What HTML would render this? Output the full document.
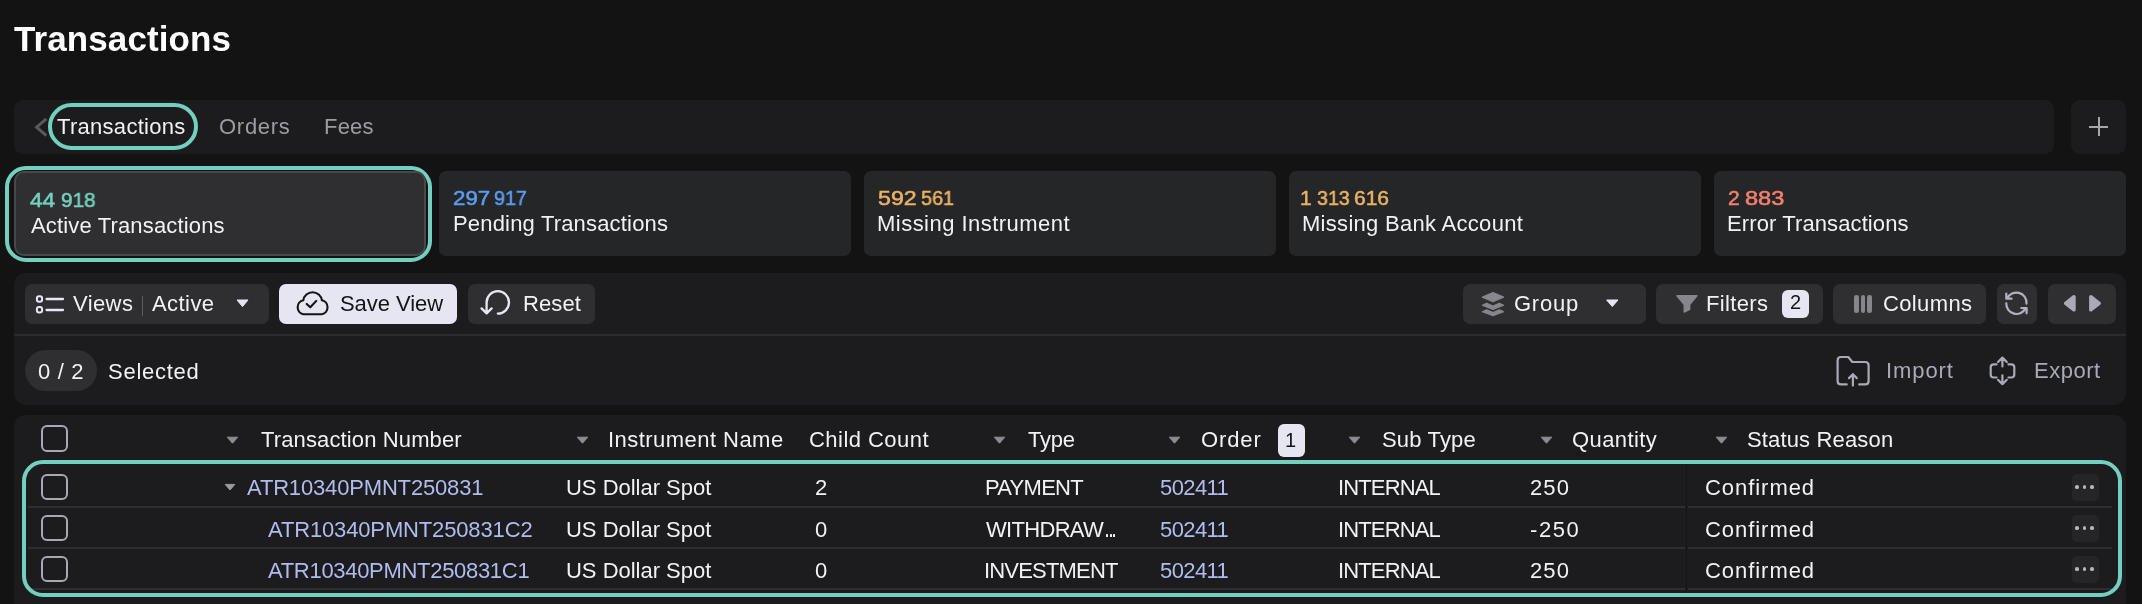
<!DOCTYPE html><html><head><meta charset="utf-8"><style>
*{box-sizing:border-box;margin:0;padding:0}
html,body{width:2142px;height:604px;overflow:hidden;background:#131313}
body{position:relative;font-family:"Liberation Sans",sans-serif;color:#f2f2f6}
.a{position:absolute}
.t{position:absolute;white-space:nowrap;will-change:transform}
.panel{position:absolute;background:#1c1c1e}
.card{position:absolute;top:171px;width:412px;height:85px;background:#252628;border-radius:7px}
.btn{position:absolute;top:284px;height:40px;background:#2f2f32;border-radius:7px}
.cb{position:absolute;left:41px;width:27px;height:26.5px;border:2px solid #a8a9b2;border-radius:6px}
.ring{position:absolute;border:4px solid #73cfbf}
.dots{position:absolute;left:2072px;width:27px;height:27px;background:#252528;border-radius:5px}
.dots i{position:absolute;top:11.3px;width:3.7px;height:3.7px;border-radius:50%;background:#b4b5bd}

</style></head><body>
<div class="panel" style="left:14px;top:100px;width:2040px;height:54px;border-radius:9px"></div>
<svg class="a" style="left:30px;top:112px" width="22" height="30" viewBox="0 0 22 30"><path d="M16.3 6.8 L6.6 15.2 L16.3 23.6" fill="none" stroke="#58585d" stroke-width="3" stroke-linecap="butt"/></svg>
<div class="ring" style="left:48px;top:103px;width:150px;height:47px;border-radius:24px"></div>
<div class="panel" style="left:2071px;top:100px;width:55px;height:54px;border-radius:9px"></div>
<div class="a" style="left:2089px;top:125.5px;width:19px;height:2px;background:#a6a6ac"></div>
<div class="a" style="left:2097.5px;top:117px;width:2px;height:19px;background:#a6a6ac"></div>
<div class="ring" style="left:5px;top:166px;width:427px;height:96px;border-radius:21px"></div>
<div class="a" style="left:14px;top:171px;width:412px;height:85px;background:#2f2f31;border:2px solid #48484b;border-radius:10px"></div>
<div class="card" style="left:439px"></div>
<div class="card" style="left:864px"></div>
<div class="card" style="left:1289px"></div>
<div class="card" style="left:1714px;width:411.5px"></div>
<div class="panel" style="left:14px;top:273px;width:2112px;height:132px;border-radius:12px"></div>
<div class="a" style="left:14px;top:334px;width:2112px;height:2px;background:#2b2b2e"></div>
<div class="btn" style="left:25px;width:244px"></div>
<svg class="a" style="left:30px;top:288px" width="40" height="32" viewBox="0 0 40 32"><rect x="6.9" y="8.2" width="5.2" height="5.6" rx="2.3" fill="none" stroke="#e8e8f2" stroke-width="2"/><rect x="6.9" y="19" width="5.2" height="5.6" rx="2.3" fill="none" stroke="#e8e8f2" stroke-width="2"/><path d="M16.6 11 H33 M16.6 22 H33" stroke="#e8e8f2" stroke-width="2.3" stroke-linecap="round"/></svg>
<div class="a" style="left:141.5px;top:296px;width:1.5px;height:20px;background:#5a5a5f"></div>
<svg class="a" style="left:236px;top:299px" width="13" height="9" viewBox="0 0 13 9"><path d="M1 1 H12 L6.5 7.6 Z" fill="#e6e6f2" stroke="#e6e6f2" stroke-width="1" stroke-linejoin="round"/></svg>
<div class="btn" style="left:279px;width:178px;background:#e5e6f2"></div>
<svg class="a" style="left:290px;top:286px" width="45" height="34" viewBox="0 0 45 34"><path d="M13.3 28.2 A7.1 7.1 0 0 1 13.3 14.3 A9.4 9.4 0 0 1 31.9 14.3 A7.1 7.1 0 0 1 31.9 28.2 Z" fill="none" stroke="#141416" stroke-width="2.1" stroke-linejoin="round"/><path d="M16.7 17.9 L20.3 21.3 L26.3 14.9" fill="none" stroke="#141416" stroke-width="2.1" stroke-linecap="round" stroke-linejoin="round"/></svg>
<div class="btn" style="left:468px;width:127px"></div>
<svg class="a" style="left:475px;top:286px" width="40" height="34" viewBox="0 0 40 34"><path d="M22.8 27.6 A11.2 11.2 0 1 0 11.6 16.4 L11.6 27.2 M6.6 22.4 L11.6 27.4 L16.6 22.4" fill="none" stroke="#e8e8f2" stroke-width="2.3" stroke-linecap="round" stroke-linejoin="round"/></svg>
<div class="btn" style="left:1463px;width:183px"></div>
<svg class="a" style="left:1476px;top:288px" width="34" height="32" viewBox="0 0 34 32"><path d="M17 4.6 L27.6 9.1 L17 13.6 L6.4 9.1 Z" fill="#86868c" stroke="#86868c" stroke-width="1.2" stroke-linejoin="round"/><path d="M6.4 17.2 L10.6 15.2 L17 18 L23.4 15.2 L27.6 17.2 L17 21.4 Z" fill="#86868c" stroke="#86868c" stroke-width="1.2" stroke-linejoin="round"/><path d="M6.4 23.8 L10.6 21.8 L17 24.6 L23.4 21.8 L27.6 23.8 L17 27.6 Z" fill="#86868c" stroke="#86868c" stroke-width="1.2" stroke-linejoin="round"/></svg>
<svg class="a" style="left:1605px;top:299px" width="15" height="9" viewBox="0 0 15 9"><path d="M1.6 1 H13 L7.3 7.6 Z" fill="#e6e6f2" stroke="#e6e6f2" stroke-width="1" stroke-linejoin="round"/></svg>
<div class="btn" style="left:1656px;width:167px"></div>
<svg class="a" style="left:1670px;top:288px" width="35" height="32" viewBox="0 0 35 32"><path d="M6.9 7.8 L27 7.8 L19.7 16.6 L19.7 21.3 L14.2 24 L14.2 16.6 Z" fill="#86868c" stroke="#86868c" stroke-width="1.4" stroke-linejoin="round"/></svg>
<div class="a" style="left:1782px;top:290px;width:27px;height:28px;background:#e5e6f2;border-radius:6px"></div>
<div class="btn" style="left:1833px;width:153px"></div>
<div class="a" style="left:1854.2px;top:295.2px;width:4.6px;height:17.4px;background:#86868c;border-radius:2.3px"></div>
<div class="a" style="left:1860.9px;top:295.2px;width:4.6px;height:17.4px;background:#86868c;border-radius:2.3px"></div>
<div class="a" style="left:1867.1px;top:295.2px;width:4.6px;height:17.4px;background:#86868c;border-radius:2.3px"></div>
<div class="btn" style="left:1997px;width:40px"></div>
<svg class="a" style="left:1998px;top:286px" width="40" height="34" viewBox="0 0 40 34"><path d="M9.2 12.6 A10.1 10.1 0 0 1 28.5 17.6 M8.3 7.5 L8.3 12.7 L13.6 12.7 M8.3 17.3 A10.1 10.1 0 0 0 27.6 22 M23.3 22 L28.6 22 L28.6 27.3" fill="none" stroke="#b0b2bc" stroke-width="2.2" stroke-linecap="round" stroke-linejoin="round"/></svg>
<div class="btn" style="left:2048px;width:68px"></div>
<svg class="a" style="left:2058px;top:290px" width="50" height="28" viewBox="0 0 50 28"><path d="M7.6 13.3 L16 6.7 L16 19.9 Z M41.2 13.3 L32.8 6.7 L32.8 19.9 Z" fill="#a8aab4" stroke="#a8aab4" stroke-width="3.4" stroke-linejoin="round"/></svg>
<div class="a" style="left:25px;top:350px;width:72px;height:41px;background:#2f2f32;border-radius:21px"></div>
<svg class="a" style="left:1830px;top:350px" width="50" height="42" viewBox="0 0 50 42"><path d="M16.7 34.4 L11 34.4 Q7.6 34.4 7.6 31 L7.6 10.4 Q7.6 7 11 7 L18.3 7 L22.3 12 L35.2 12 Q38.6 12 38.6 15.4 L38.6 31 Q38.6 34.4 35.2 34.4 L29.2 34.4 M22.9 35.6 L22.9 24.2 M19 28.1 L22.9 24.2 L26.8 28.1" fill="none" stroke="#a8aab4" stroke-width="2.2" stroke-linecap="round" stroke-linejoin="round"/></svg>
<svg class="a" style="left:1982px;top:350px" width="40" height="42" viewBox="0 0 40 42"><path d="M14.6 14.3 L11.7 14.3 Q8.7 14.3 8.7 17.3 L8.7 24.5 Q8.7 27.5 11.7 27.5 L14.6 27.5 M26.4 14.3 L29.3 14.3 Q32.3 14.3 32.3 17.3 L32.3 24.5 Q32.3 27.5 29.3 27.5 L26.4 27.5 M20.4 16.5 L20.4 7.6 M16 12 L20.4 7.6 L24.8 12 M20.4 25.3 L20.4 34.2 M16 29.8 L20.4 34.2 L24.8 29.8" fill="none" stroke="#a8aab4" stroke-width="2.2" stroke-linecap="round" stroke-linejoin="round"/></svg>
<div class="panel" style="left:14px;top:415px;width:2112px;height:240px;border-radius:12px"></div>
<div class="cb" style="top:425px"></div>
<svg class="a" style="left:226.0px;top:436px" width="13" height="9" viewBox="0 0 13 9"><path d="M1.2 1.2 H11.8 L6.5 7.2 Z" fill="#8c8c94" stroke="#8c8c94" stroke-width="1" stroke-linejoin="round"/></svg>
<svg class="a" style="left:575.7px;top:436px" width="13" height="9" viewBox="0 0 13 9"><path d="M1.2 1.2 H11.8 L6.5 7.2 Z" fill="#8c8c94" stroke="#8c8c94" stroke-width="1" stroke-linejoin="round"/></svg>
<svg class="a" style="left:993.3px;top:436px" width="13" height="9" viewBox="0 0 13 9"><path d="M1.2 1.2 H11.8 L6.5 7.2 Z" fill="#8c8c94" stroke="#8c8c94" stroke-width="1" stroke-linejoin="round"/></svg>
<svg class="a" style="left:1168.0px;top:436px" width="13" height="9" viewBox="0 0 13 9"><path d="M1.2 1.2 H11.8 L6.5 7.2 Z" fill="#8c8c94" stroke="#8c8c94" stroke-width="1" stroke-linejoin="round"/></svg>
<svg class="a" style="left:1347.7px;top:436px" width="13" height="9" viewBox="0 0 13 9"><path d="M1.2 1.2 H11.8 L6.5 7.2 Z" fill="#8c8c94" stroke="#8c8c94" stroke-width="1" stroke-linejoin="round"/></svg>
<svg class="a" style="left:1539.6px;top:436px" width="13" height="9" viewBox="0 0 13 9"><path d="M1.2 1.2 H11.8 L6.5 7.2 Z" fill="#8c8c94" stroke="#8c8c94" stroke-width="1" stroke-linejoin="round"/></svg>
<svg class="a" style="left:1714.6px;top:436px" width="13" height="9" viewBox="0 0 13 9"><path d="M1.2 1.2 H11.8 L6.5 7.2 Z" fill="#8c8c94" stroke="#8c8c94" stroke-width="1" stroke-linejoin="round"/></svg>
<div class="a" style="left:1278px;top:424px;width:27px;height:33px;background:#e5e6f2;border-radius:6px"></div>
<div class="a" style="left:1685.5px;top:464px;width:1.5px;height:130px;background:#151517"></div>
<div class="a" style="left:28px;top:506px;width:1657px;height:2px;background:#2e2e31"></div>
<div class="a" style="left:1688px;top:506px;width:424px;height:2px;background:#2e2e31"></div>
<div class="a" style="left:28px;top:547px;width:1657px;height:2px;background:#2e2e31"></div>
<div class="a" style="left:1688px;top:547px;width:424px;height:2px;background:#2e2e31"></div>
<div class="a" style="left:28px;top:588px;width:1657px;height:2px;background:#2e2e31"></div>
<div class="a" style="left:1688px;top:588px;width:424px;height:2px;background:#2e2e31"></div>
<div class="cb" style="top:473.5px"></div>
<div class="dots" style="top:474.2px"><i style="left:3.4px"></i><i style="left:10.7px"></i><i style="left:18.1px"></i></div>
<div class="cb" style="top:514.5px"></div>
<div class="dots" style="top:515.2px"><i style="left:3.4px"></i><i style="left:10.7px"></i><i style="left:18.1px"></i></div>
<div class="cb" style="top:555.5px"></div>
<div class="dots" style="top:556.2px"><i style="left:3.4px"></i><i style="left:10.7px"></i><i style="left:18.1px"></i></div>
<svg class="a" style="left:224px;top:483px" width="13" height="9" viewBox="0 0 13 9"><path d="M1.2 1.4 H10.8 L6 7 Z" fill="#9a9aa0" stroke="#9a9aa0" stroke-width="1" stroke-linejoin="round"/></svg>
<div class="a" style="left:1105.9px;top:534px;width:2.4px;height:2.6px;background:#f2f2f6;border-radius:0.6px"></div>
<div class="a" style="left:1109.6px;top:534px;width:2.4px;height:2.6px;background:#f2f2f6;border-radius:0.6px"></div>
<div class="a" style="left:1113.1px;top:534px;width:2.4px;height:2.6px;background:#f2f2f6;border-radius:0.6px"></div>
<div class="ring" style="left:22px;top:460px;width:2100px;height:136.8px;border-radius:21px"></div>
<div class="t" style="left:13.50px;top:21.41px;font-size:35px;line-height:35px;color:#ffffff;font-weight:bold;letter-spacing:0.091px">Transactions</div>
<div class="t" style="left:57.00px;top:116.21px;font-size:22px;line-height:22px;color:#f2f2f6;letter-spacing:0.291px">Transactions</div>
<div class="t" style="left:219.00px;top:116.32px;font-size:22px;line-height:22px;color:#9c9ca4;letter-spacing:0.720px">Orders</div>
<div class="t" style="left:324.00px;top:116.32px;font-size:22px;line-height:22px;color:#9c9ca4;letter-spacing:0.200px">Fees</div>
<div class="t" style="left:30.00px;top:188.90px;font-size:21px;line-height:21px;color:#74d0c0;-webkit-text-stroke:0.55px #74d0c0;transform:scaleX(1.0789);transform-origin:0 0">44</div>
<div class="t" style="left:60.50px;top:188.90px;font-size:21px;line-height:21px;color:#74d0c0;-webkit-text-stroke:0.55px #74d0c0;transform:scaleX(0.9886);transform-origin:0 0">918</div>
<div class="t" style="left:30.50px;top:214.71px;font-size:22px;line-height:22px;color:#f2f2f6;letter-spacing:0.156px">Active Transactions</div>
<div class="t" style="left:452.50px;top:186.81px;font-size:21px;line-height:21px;color:#5c9def;-webkit-text-stroke:0.55px #5c9def;transform:scaleX(1.0606);transform-origin:0 0">297</div>
<div class="t" style="left:493.50px;top:186.81px;font-size:21px;line-height:21px;color:#5c9def;-webkit-text-stroke:0.55px #5c9def;transform:scaleX(0.9394);transform-origin:0 0">917</div>
<div class="t" style="left:452.50px;top:213.21px;font-size:22px;line-height:22px;color:#f2f2f6;letter-spacing:0.179px">Pending Transactions</div>
<div class="t" style="left:877.50px;top:187.10px;font-size:21px;line-height:21px;color:#ebb264;-webkit-text-stroke:0.55px #ebb264;transform:scaleX(1.1036);transform-origin:0 0">592</div>
<div class="t" style="left:920.50px;top:187.10px;font-size:21px;line-height:21px;color:#ebb264;-webkit-text-stroke:0.55px #ebb264;transform:scaleX(0.9457);transform-origin:0 0">561</div>
<div class="t" style="left:876.50px;top:213.21px;font-size:22px;line-height:22px;color:#f2f2f6;letter-spacing:0.471px">Missing Instrument</div>
<div class="t" style="left:1300.00px;top:187.01px;font-size:21px;line-height:21px;color:#ebb264;-webkit-text-stroke:0.55px #ebb264">1</div>
<div class="t" style="left:1317.00px;top:187.01px;font-size:21px;line-height:21px;color:#ebb264;-webkit-text-stroke:0.55px #ebb264;transform:scaleX(0.9357);transform-origin:0 0">313</div>
<div class="t" style="left:1353.50px;top:187.01px;font-size:21px;line-height:21px;color:#ebb264;-webkit-text-stroke:0.55px #ebb264;transform:scaleX(0.9886);transform-origin:0 0">616</div>
<div class="t" style="left:1301.50px;top:213.21px;font-size:22px;line-height:22px;color:#f2f2f6;letter-spacing:0.295px">Missing Bank Account</div>
<div class="t" style="left:1727.80px;top:187.01px;font-size:21px;line-height:21px;color:#f2806d;-webkit-text-stroke:0.55px #f2806d">2</div>
<div class="t" style="left:1745.00px;top:187.01px;font-size:21px;line-height:21px;color:#f2806d;-webkit-text-stroke:0.55px #f2806d;transform:scaleX(1.1220);transform-origin:0 0">883</div>
<div class="t" style="left:1727.00px;top:213.21px;font-size:22px;line-height:22px;color:#f2f2f6;letter-spacing:0.106px">Error Transactions</div>
<div class="t" style="left:72.50px;top:293.00px;font-size:22px;line-height:22px;color:#f2f2f6;letter-spacing:0.400px">Views</div>
<div class="t" style="left:152.00px;top:293.00px;font-size:22px;line-height:22px;color:#f2f2f6;letter-spacing:0.440px">Active</div>
<div class="t" style="left:340.00px;top:292.82px;font-size:22px;line-height:22px;color:#141416;letter-spacing:-0.050px">Save View</div>
<div class="t" style="left:522.50px;top:292.82px;font-size:22px;line-height:22px;color:#f2f2f6;letter-spacing:0.100px">Reset</div>
<div class="t" style="left:1513.50px;top:293.00px;font-size:22px;line-height:22px;color:#f2f2f6;letter-spacing:0.750px">Group</div>
<div class="t" style="left:1705.50px;top:293.00px;font-size:22px;line-height:22px;color:#f2f2f6;letter-spacing:0.333px">Filters</div>
<div class="t" style="left:1789.60px;top:292.20px;font-size:20px;line-height:20px;color:#141416">2</div>
<div class="t" style="left:1883.00px;top:293.00px;font-size:22px;line-height:22px;color:#f2f2f6;letter-spacing:0.367px">Columns</div>
<div class="t" style="left:38.00px;top:360.50px;font-size:22px;line-height:22px;color:#f2f2f6;letter-spacing:0.650px">0 / 2</div>
<div class="t" style="left:108.00px;top:360.50px;font-size:22px;line-height:22px;color:#f2f2f6;letter-spacing:0.743px">Selected</div>
<div class="t" style="left:1885.50px;top:360.32px;font-size:22px;line-height:22px;color:#a8aab4;letter-spacing:0.920px">Import</div>
<div class="t" style="left:2034.00px;top:360.32px;font-size:22px;line-height:22px;color:#a8aab4;letter-spacing:0.520px">Export</div>
<div class="t" style="left:260.50px;top:429.41px;font-size:22px;line-height:22px;color:#f2f2f6;letter-spacing:0.129px">Transaction Number</div>
<div class="t" style="left:607.50px;top:429.41px;font-size:22px;line-height:22px;color:#f2f2f6;letter-spacing:0.457px">Instrument Name</div>
<div class="t" style="left:808.50px;top:429.41px;font-size:22px;line-height:22px;color:#f2f2f6;letter-spacing:0.460px">Child Count</div>
<div class="t" style="left:1027.50px;top:429.41px;font-size:22px;line-height:22px;color:#f2f2f6;letter-spacing:-0.200px">Type</div>
<div class="t" style="left:1201.00px;top:429.41px;font-size:22px;line-height:22px;color:#f2f2f6;letter-spacing:0.900px">Order</div>
<div class="t" style="left:1285.00px;top:430.00px;font-size:20px;line-height:20px;color:#141416">1</div>
<div class="t" style="left:1382.00px;top:429.41px;font-size:22px;line-height:22px;color:#f2f2f6;letter-spacing:0.171px">Sub Type</div>
<div class="t" style="left:1572.00px;top:429.41px;font-size:22px;line-height:22px;color:#f2f2f6;letter-spacing:0.400px">Quantity</div>
<div class="t" style="left:1747.00px;top:429.41px;font-size:22px;line-height:22px;color:#f2f2f6;letter-spacing:0.150px">Status Reason</div>
<div class="t" style="left:247.00px;top:477.32px;font-size:22px;line-height:22px;color:#b0bcee;letter-spacing:-0.165px">ATR10340PMNT250831</div>
<div class="t" style="left:565.50px;top:477.32px;font-size:22px;line-height:22px;color:#f2f2f6;letter-spacing:-0.015px">US Dollar Spot</div>
<div class="t" style="left:814.70px;top:477.32px;font-size:22px;line-height:22px;color:#f2f2f6">2</div>
<div class="t" style="left:984.50px;top:477.32px;font-size:22px;line-height:22px;color:#f2f2f6;letter-spacing:-0.733px">PAYMENT</div>
<div class="t" style="left:1159.50px;top:477.32px;font-size:22px;line-height:22px;color:#b0bcee;letter-spacing:-0.600px">502411</div>
<div class="t" style="left:1338.00px;top:477.32px;font-size:22px;line-height:22px;color:#f2f2f6;letter-spacing:-0.857px">INTERNAL</div>
<div class="t" style="left:1530.00px;top:477.32px;font-size:22px;line-height:22px;color:#f2f2f6;letter-spacing:1.100px">250</div>
<div class="t" style="left:1704.50px;top:477.32px;font-size:22px;line-height:22px;color:#f2f2f6;letter-spacing:0.950px">Confirmed</div>
<div class="t" style="left:267.50px;top:518.50px;font-size:22px;line-height:22px;color:#b0bcee;letter-spacing:-0.147px">ATR10340PMNT250831C2</div>
<div class="t" style="left:565.50px;top:518.50px;font-size:22px;line-height:22px;color:#f2f2f6;letter-spacing:-0.015px">US Dollar Spot</div>
<div class="t" style="left:815.40px;top:518.50px;font-size:22px;line-height:22px;color:#f2f2f6">0</div>
<div class="t" style="left:985.50px;top:518.50px;font-size:22px;line-height:22px;color:#f2f2f6;letter-spacing:-0.686px">WITHDRAW</div>
<div class="t" style="left:1159.50px;top:518.50px;font-size:22px;line-height:22px;color:#b0bcee;letter-spacing:-0.600px">502411</div>
<div class="t" style="left:1338.00px;top:518.50px;font-size:22px;line-height:22px;color:#f2f2f6;letter-spacing:-0.857px">INTERNAL</div>
<div class="t" style="left:1530.00px;top:518.50px;font-size:22px;line-height:22px;color:#f2f2f6;letter-spacing:1.600px">-250</div>
<div class="t" style="left:1704.50px;top:518.50px;font-size:22px;line-height:22px;color:#f2f2f6;letter-spacing:0.950px">Confirmed</div>
<div class="t" style="left:267.50px;top:559.50px;font-size:22px;line-height:22px;color:#b0bcee;letter-spacing:-0.305px">ATR10340PMNT250831C1</div>
<div class="t" style="left:565.50px;top:559.50px;font-size:22px;line-height:22px;color:#f2f2f6;letter-spacing:-0.015px">US Dollar Spot</div>
<div class="t" style="left:815.40px;top:559.50px;font-size:22px;line-height:22px;color:#f2f2f6">0</div>
<div class="t" style="left:983.50px;top:559.50px;font-size:22px;line-height:22px;color:#f2f2f6;letter-spacing:-0.822px">INVESTMENT</div>
<div class="t" style="left:1159.50px;top:559.50px;font-size:22px;line-height:22px;color:#b0bcee;letter-spacing:-0.600px">502411</div>
<div class="t" style="left:1338.00px;top:559.50px;font-size:22px;line-height:22px;color:#f2f2f6;letter-spacing:-0.857px">INTERNAL</div>
<div class="t" style="left:1530.00px;top:559.50px;font-size:22px;line-height:22px;color:#f2f2f6;letter-spacing:1.100px">250</div>
<div class="t" style="left:1704.50px;top:559.50px;font-size:22px;line-height:22px;color:#f2f2f6;letter-spacing:0.950px">Confirmed</div>
</body></html>
